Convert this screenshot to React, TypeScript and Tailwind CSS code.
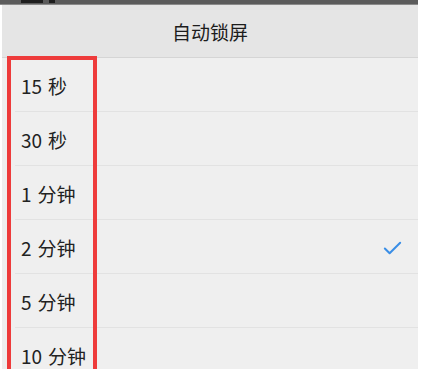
import { Check } from "lucide-react";

const options = [
  { n: "15", unit: "秒" },
  { n: "30", unit: "秒" },
  { n: "1", unit: "分钟" },
  { n: "2", unit: "分钟" },
  { n: "5", unit: "分钟" },
  { n: "10", unit: "分钟" },
];
const selected = "2";

export default function App() {
  return (
    <div
      className="relative h-[369px] w-[433px] overflow-hidden bg-white"
      style={{ fontFamily: '"Noto Sans CJK SC", "Noto Sans", sans-serif' }}
    >
      {/* cropped status bar */}
      <div className="flex h-[5px] w-[418px] items-start gap-[6px] border-b border-[#8a8a8a] bg-[#5b5b5b] pl-[21px]">
        <span className="h-[3px] w-[22px] bg-[#1e1e1e]" />
        <span className="h-[3px] w-[6px] bg-[#1e1e1e]" />
      </div>

      <div className="ml-[2px] w-[416px]">
        {/* header */}
        <div className="flex h-[53px] items-center justify-center border-b border-[#d5d5d5] bg-[#e5e5e5] pt-[2px] text-[19px] text-[#1c1c1c]">
          自动锁屏
        </div>

        {/* options */}
        <ul className="bg-[#efefef]">
          {options.map((o) => (
            <li key={o.n} className="pl-[13px]">
              <div className="flex h-[54px] items-center justify-between border-b border-[#e2e2e2] pl-[6px] pr-[14px] pt-[3px]">
                <span className="flex gap-[6px] text-[19px] text-[#222]">
                  <span>{o.n}</span>
                  <span>{o.unit}</span>
                </span>
                {o.n === selected && (
                  <Check size={23} strokeWidth={2.1} className="text-[#3a8ee6]" />
                )}
              </div>
            </li>
          ))}
        </ul>
      </div>

      {/* red annotation box */}
      <div className="absolute left-[7px] top-[56px] h-[340px] w-[90px] border-4 border-[#ee3b3b]" />
    </div>
  );
}
